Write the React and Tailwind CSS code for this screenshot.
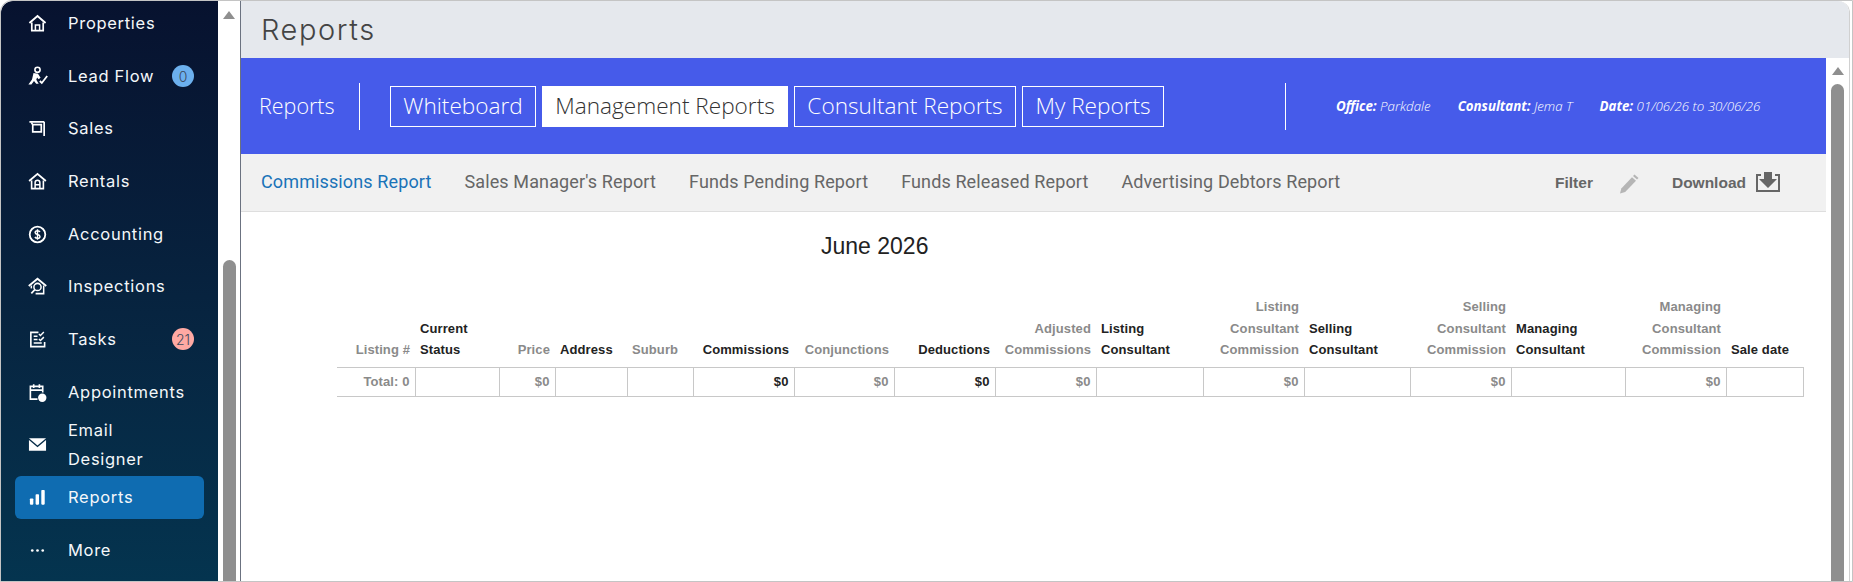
import { Fragment } from "react";

function HomeIcon() {
  return (
    <svg viewBox="0 0 20 20" className="h-[19px] w-[19px]" fill="none" stroke="#fff">
      <path d="M1.5 9.5 10 2.2l8.5 7.3" strokeWidth="2" />
      <path d="M4 9v8.5h12V9" strokeWidth="1.8" />
      <path d="M7.8 17.5v-6h4.4v6" strokeWidth="1.6" />
    </svg>
  );
}

function LeadIcon() {
  return (
    <svg viewBox="0 0 20 20" className="h-[20px] w-[20px]" fill="#fff">
      <circle cx="9.5" cy="3.8" r="2.6" fill="none" stroke="#fff" strokeWidth="1.6" />
      <path d="M5.5 7 10 7.8l2.6 4-2 1.4-1.5-1.7-.8 2.3 2.4 4H8.2L6 15l-2.6 3.4H.4L4 13.5z" />
      <path d="m11.8 15 2 2 5.4-7" fill="none" stroke="#fff" strokeWidth="1.8" />
    </svg>
  );
}

function SalesIcon() {
  return (
    <svg viewBox="0 0 20 20" className="h-[19px] w-[19px]" fill="none" stroke="#fff">
      <path d="M1.5 3h15.5" strokeWidth="1.8" />
      <path d="M17 3v15" strokeWidth="1.8" />
      <path d="M3.5 3.5 5 6v7.5h9V6H4.5" strokeWidth="1.8" />
    </svg>
  );
}

function RentalsIcon() {
  return (
    <svg viewBox="0 0 20 20" className="h-[19px] w-[19px]" fill="none" stroke="#fff">
      <path d="M1.2 9.5 10 2l8.8 7.5" strokeWidth="2" />
      <path d="M3.8 9v8.5h12.4V9" strokeWidth="1.7" />
      <path d="M7.5 17.5v-6.3a2.5 2.5 0 0 1 5 0v6.3M7.5 13.5h5" strokeWidth="1.6" />
    </svg>
  );
}

function DollarIcon() {
  return (
    <svg viewBox="0 0 20 20" className="h-[19px] w-[19px]" fill="none" stroke="#fff">
      <circle cx="10" cy="10" r="8.2" strokeWidth="1.9" />
      <path d="M12.6 7.4C12.2 6.5 11.2 6 10 6 8.6 6 7.5 6.8 7.5 8s1.1 1.7 2.5 2 2.6.8 2.6 2-1.2 2-2.6 2c-1.3 0-2.3-.6-2.7-1.5M10 4.6v10.8" strokeWidth="1.5" />
    </svg>
  );
}

function InspectIcon() {
  return (
    <svg viewBox="0 0 20 20" className="h-[19px] w-[19px]" fill="none" stroke="#fff">
      <path d="M.8 9.5 10 1.8l9.2 7.7" strokeWidth="1.9" />
      <path d="M16.5 9v8.5H8" strokeWidth="1.6" />
      <path d="M3.5 9v3" strokeWidth="1.6" />
      <circle cx="10" cy="10.5" r="3.8" strokeWidth="1.6" />
      <path d="m7.2 13.3-3.7 3.9" strokeWidth="1.8" />
    </svg>
  );
}

function TasksIcon() {
  return (
    <svg viewBox="0 0 20 20" className="h-[19px] w-[19px]" fill="none" stroke="#fff">
      <path d="M11 2.5H3v15h14.5v-5" strokeWidth="1.7" />
      <path d="M6 6.5h4M6 10h4M6 13.8h8.5" strokeWidth="1.6" />
      <path d="m11.5 4.2 1.6 1.6 3.6-3.6M11.5 9.5l1.6 1.6 3.6-3.6" strokeWidth="1.5" />
    </svg>
  );
}

function CalendarIcon() {
  return (
    <svg viewBox="0 0 20 20" className="h-[19px] w-[19px]" fill="none" stroke="#fff">
      <path d="M10 17H2.5V3.5h13V10" strokeWidth="1.7" />
      <path d="M2.5 7.5h13M6 1.2v4M12 1.2v4" strokeWidth="1.7" />
      <circle cx="15" cy="15.5" r="4.4" fill="#fff" stroke="none" />
    </svg>
  );
}

function MailIcon() {
  return (
    <svg viewBox="0 0 20 20" className="h-[19px] w-[19px]">
      <path d="M1 3.5h18L10 11z" fill="#fff" />
      <path d="M1 5.2V16.5h18V5.2l-9 7.6z" fill="#fff" />
    </svg>
  );
}

function BarsIcon() {
  return (
    <svg viewBox="0 0 20 20" className="h-[19px] w-[19px]" fill="#fff">
      <rect x="2" y="11" width="3.6" height="6.5" rx="0.8" />
      <rect x="8" y="6.5" width="3.6" height="11" rx="0.8" />
      <rect x="14" y="2" width="3.6" height="15.5" rx="0.8" />
    </svg>
  );
}

function DotsIcon() {
  return (
    <svg viewBox="0 0 20 20" className="h-[19px] w-[19px]" fill="#fff">
      <circle cx="4.5" cy="10" r="1.4" />
      <circle cx="10" cy="10" r="1.4" />
      <circle cx="15.5" cy="10" r="1.4" />
    </svg>
  );
}

function PencilIcon() {
  return (
    <svg viewBox="0 0 21 21" className="h-[21px] w-[21px]" fill="#b5b5b5">
      <path d="M15.5 1.5 19.5 5 18 6.6l-4-3.6z" />
      <path d="M13 4.2 17 7.8 6.2 19 1 20.5l1.3-5z" />
    </svg>
  );
}

function DownloadIcon() {
  return (
    <svg viewBox="0 0 24 22" className="h-[22px] w-[24px]" fill="#666">
      <path d="M8 1h8v7h5l-9 9-9-9h5z" />
      <path d="M0 3h5v2H2v14h20V5h-3V3h5v18H0z" />
    </svg>
  );
}

function ScrollArrow() {
  return <div className="h-0 w-0 border-x-[6px] border-b-[8px] border-x-transparent border-b-[#8f8f8f]" />;
}

const navItems = [
  { label: "Properties", icon: <HomeIcon /> },
  { label: "Lead Flow", icon: <LeadIcon />, badge: "0", badgeColor: "bg-[#6cb0ee]" },
  { label: "Sales", icon: <SalesIcon /> },
  { label: "Rentals", icon: <RentalsIcon /> },
  { label: "Accounting", icon: <DollarIcon /> },
  { label: "Inspections", icon: <InspectIcon /> },
  { label: "Tasks", icon: <TasksIcon />, badge: "21", badgeColor: "bg-[#ffa9a3]" },
  { label: "Appointments", icon: <CalendarIcon /> },
  { label: "Email Designer", icon: <MailIcon /> },
  { label: "Reports", icon: <BarsIcon />, active: true },
  { label: "More", icon: <DotsIcon /> },
];

const tabs = [
  { label: "Whiteboard", width: "w-[146px]" },
  { label: "Management Reports", width: "w-[246px]", active: true },
  { label: "Consultant Reports", width: "w-[222px]" },
  { label: "My Reports", width: "w-[142px]" },
];

const subTabs = ["Sales Manager's Report", "Funds Pending Report", "Funds Released Report", "Advertising Debtors Report"];

const columns = [
  { width: "w-[78px]", head: ["Listing #"], right: true, gray: true, value: "Total: 0" },
  { width: "w-[84px]", head: ["Current", "Status"] },
  { width: "w-[56px]", head: ["Price"], right: true, gray: true, value: "$0" },
  { width: "w-[72px]", head: ["Address"] },
  { width: "w-[66px]", head: ["Suburb"], gray: true },
  { width: "w-[101px]", head: ["Commissions"], right: true, value: "$0" },
  { width: "w-[100px]", head: ["Conjunctions"], right: true, gray: true, value: "$0" },
  { width: "w-[101px]", head: ["Deductions"], right: true, value: "$0" },
  { width: "w-[101px]", head: ["Adjusted", "Commissions"], right: true, gray: true, value: "$0" },
  { width: "w-[107px]", head: ["Listing", "Consultant"] },
  { width: "w-[101px]", head: ["Listing", "Consultant", "Commission"], right: true, gray: true, value: "$0" },
  { width: "w-[106px]", head: ["Selling", "Consultant"] },
  { width: "w-[101px]", head: ["Selling", "Consultant", "Commission"], right: true, gray: true, value: "$0" },
  { width: "w-[114px]", head: ["Managing", "Consultant"] },
  { width: "w-[101px]", head: ["Managing", "Consultant", "Commission"], right: true, gray: true, value: "$0" },
  { width: "w-[77px]", head: ["Sale date"] },
];

function Sidebar() {
  return (
    <aside className="h-full w-[217px] shrink-0 overflow-hidden rounded-tl-xl bg-gradient-to-b from-[#07122f] to-[#04344f] font-['Inter',sans-serif] text-[16.5px] tracking-[0.7px] text-[#f4f7fa]">
      <div className="-mt-[4px]">
        {navItems.map((item) => (
          <div key={item.label} className="flex h-[52.7px] items-center">
            <div className={`ml-[14px] flex h-[43px] w-[189px] items-center rounded-md ${item.active ? "bg-[#0f6cb1]" : ""}`}>
              <div className="flex w-[53px] shrink-0 pl-[13px]">{item.icon}</div>
              <span className={item.label === "Email Designer" ? "w-[90px] leading-[29px]" : ""}>{item.label}</span>
              {item.badge && (
                <span className={`ml-auto mr-[10px] flex h-[22px] w-[22px] items-center justify-center rounded-full text-[14px] font-light tracking-normal text-[#3d4a5c] ${item.badgeColor}`}>
                  {item.badge}
                </span>
              )}
            </div>
          </div>
        ))}
      </div>
    </aside>
  );
}

function LeftGutter() {
  return (
    <div className="flex h-full w-[23px] shrink-0 flex-col items-center border-r border-[#6b7280] bg-white">
      <div className="mt-[10px]">
        <ScrollArrow />
      </div>
      <div className="mt-[241px] w-[13px] flex-1 rounded-t-[7px] bg-[#8f8f8f]" />
    </div>
  );
}

function BlueBar() {
  return (
    <div className="flex h-[96px] items-center bg-[#465bea] pl-[18px] font-['Open_Sans',sans-serif] text-white">
      <span className="w-[100px] text-[21.5px] font-light">Reports</span>
      <div className="h-[47px] w-px bg-white" />
      <div className="ml-[30px] flex gap-[6px]">
        {tabs.map((tab) => (
          <div
            key={tab.label}
            className={`flex h-[41px] items-center justify-center border border-white pb-[1px] text-[22.6px] font-light ${tab.width} ${tab.active ? "bg-white text-[#333]" : ""}`}
          >
            {tab.label}
          </div>
        ))}
      </div>
      <div className="ml-[121px] h-[47px] w-px bg-white" />
      <div className="ml-[50px] flex gap-[27px] pt-[1px] text-[13.3px] font-light italic">
        <span>
          <b className="font-bold">Office:</b> Parkdale
        </span>
        <span>
          <b className="font-bold">Consultant:</b> Jema T
        </span>
        <span>
          <b className="font-bold">Date:</b> 01/06/26 to 30/06/26
        </span>
      </div>
    </div>
  );
}

function SubNav() {
  return (
    <div className="flex h-[58px] items-center border-b border-[#dedede] bg-[#f1f1f1] pb-[3px] pl-[20px] font-['Roboto',sans-serif] text-[18px] tracking-[0.12px] text-[#666]">
      <span className="text-[#1a73b8]">Commissions Report</span>
      {subTabs.map((label) => (
        <span key={label} className="ml-[33px]">
          {label}
        </span>
      ))}
      <div className="ml-auto flex items-center pr-[46px] pt-[4px] font-['Liberation_Sans',sans-serif] text-[15.5px] font-bold tracking-normal">
        <span>Filter</span>
        <span className="ml-[26px]">
          <PencilIcon />
        </span>
        <span className="ml-[32px]">Download</span>
        <span className="ml-[10px] -mt-[3px]">
          <DownloadIcon />
        </span>
      </div>
    </div>
  );
}

function ReportTable() {
  return (
    <table className="ml-[96px] mt-[37px] w-[1466px] table-fixed border-collapse font-['Liberation_Sans',sans-serif] text-[13px] font-bold tracking-[0.1px]">
      <colgroup>
        {columns.map((col) => (
          <col key={col.head.join(" ")} className={col.width} />
        ))}
      </colgroup>
      <thead>
        <tr>
          {columns.map((col) => (
            <th
              key={col.head.join(" ")}
              className={`whitespace-nowrap px-[5px] pb-[6px] align-bottom font-bold leading-[21.5px] ${col.right ? "text-right" : "text-left"} ${col.gray ? "text-[#8a8a8a]" : "text-[#222]"}`}
            >
              {col.head.map((line, i) => (
                <Fragment key={line}>
                  {i > 0 && <br />}
                  {line}
                </Fragment>
              ))}
            </th>
          ))}
        </tr>
      </thead>
      <tbody>
        <tr className="border-y border-[#c8c8c8]">
          {columns.map((col, i) => (
            <td
              key={col.head.join(" ")}
              className={`h-[29px] px-[5px] text-right ${i > 0 ? "border-l" : ""} ${i === columns.length - 1 ? "border-r" : ""} border-[#c8c8c8] ${col.gray ? "text-[#8a8a8a]" : "text-[#222]"}`}
            >
              {col.value}
            </td>
          ))}
        </tr>
      </tbody>
    </table>
  );
}

export default function App() {
  return (
    <div className="flex h-[582px] w-[1853px] overflow-hidden rounded-tl-xl border border-[#c4c4c4] bg-white">
      <Sidebar />
      <LeftGutter />
      <main className="flex h-full w-[1609px] shrink-0 flex-col overflow-hidden rounded-tr-xl border-r border-[#d0d0d0]">
        <div className="flex h-[57px] shrink-0 items-center bg-[#e5e8ed] pl-[20px] font-['Inter',sans-serif] text-[29px] font-light tracking-[1.6px] text-[#444]">
          Reports
        </div>
        <div className="flex min-h-0 flex-1">
          <div className="w-[1585px] shrink-0">
            <BlueBar />
            <SubNav />
            <h1 className="ml-[580px] mt-[21px] font-['Liberation_Sans',sans-serif] text-[23px] leading-[26px] text-[#222]">June 2026</h1>
            <ReportTable />
          </div>
          <div className="flex flex-1 flex-col items-center bg-white">
            <div className="mt-[9px]">
              <ScrollArrow />
            </div>
            <div className="mt-[9px] w-[13px] flex-1 rounded-t-[7px] bg-[#8f8f8f]" />
          </div>
        </div>
      </main>
    </div>
  );
}
